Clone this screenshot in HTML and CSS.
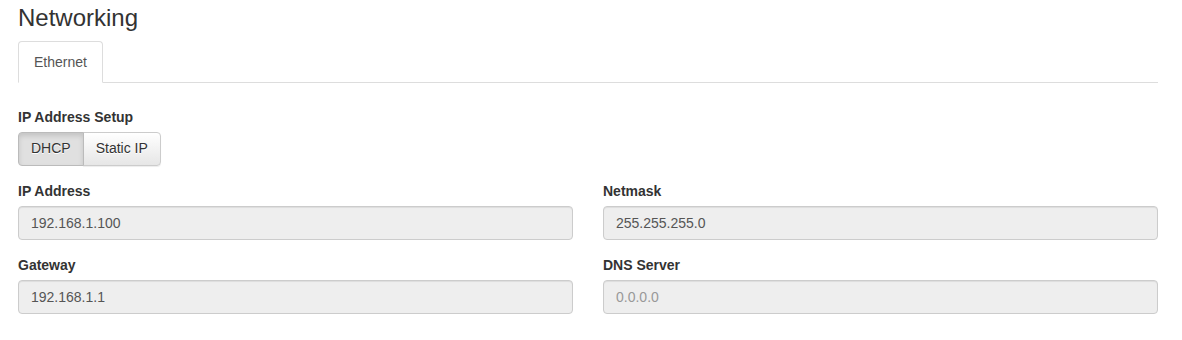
FILE: index.html
```html
<!DOCTYPE html>
<html lang="en">
<head>
    <meta charset="UTF-8">
    <meta name="viewport" content="width=device-width, initial-scale=1.0">
    <title>Networking</title>
    <link rel="stylesheet" href="styles.css">
</head>
<body>
    <div class="container">
        <h3 class="page-title">Networking</h3>

        <ul class="nav-tabs">
            <li class="active"><a href="#">Ethernet</a></li>
        </ul>

        <div class="tab-content">
            <div class="form-group">
                <label>IP Address Setup</label>
                <div class="btn-group">
                    <button class="btn active">DHCP</button>
                    <button class="btn">Static IP</button>
                </div>
            </div>

            <div class="row">
                <div class="form-group">
                    <label for="ip">IP Address</label>
                    <input type="text" id="ip" class="form-control" value="192.168.1.100" readonly>
                </div>
                <div class="form-group">
                    <label for="netmask">Netmask</label>
                    <input type="text" id="netmask" class="form-control" value="255.255.255.0" readonly>
                </div>
                <div class="form-group">
                    <label for="gateway">Gateway</label>
                    <input type="text" id="gateway" class="form-control" value="192.168.1.1" readonly>
                </div>
                <div class="form-group">
                    <label for="dns">DNS Server</label>
                    <input type="text" id="dns" class="form-control" placeholder="0.0.0.0" readonly>
                </div>
            </div>
        </div>
    </div>
</body>
</html>
```

FILE: styles.css
```css
body {
    margin: 0;
    font-family: "Liberation Sans", Arial, Helvetica, sans-serif;
    font-size: 14px;
    line-height: 1.42857;
    color: #333;
    background: #fff;
}
.container {
    padding: 0 24px 0 18px;
}
.page-title {
    margin: 5px 0 10px;
    font-size: 24px;
    font-weight: 500;
    line-height: 26px;
}

/* Tabs */
.nav-tabs {
    display: flex;
    margin: 0;
    padding: 0;
    list-style: none;
    border-bottom: 1px solid #ddd;
}
.nav-tabs li {
    margin-bottom: -1px;
}
.nav-tabs li a {
    display: block;
    padding: 10px 15px;
    line-height: 20px;
    color: #555;
    text-decoration: none;
    border: 1px solid transparent;
    border-radius: 4px 4px 0 0;
}
.nav-tabs li.active a {
    background: #fff;
    border-color: #ddd #ddd transparent;
}
.tab-content {
    padding-top: 24px;
}

/* Form */
.row {
    display: grid;
    grid-template-columns: 1fr 1fr;
    column-gap: 30px;
}
.form-group {
    margin-bottom: 15px;
}
.form-group label {
    display: block;
    margin-bottom: 5px;
    font-weight: bold;
    line-height: 20px;
}
.form-control {
    display: block;
    box-sizing: border-box;
    width: 100%;
    height: 34px;
    padding: 6px 12px;
    font-family: inherit;
    font-size: 14px;
    line-height: 1.42857;
    color: #555;
    background: #eee;
    border: 1px solid #ccc;
    border-radius: 4px;
    box-shadow: inset 0 1px 1px rgba(0, 0, 0, 0.075);
    outline: none;
}
.form-control::placeholder {
    color: #999;
}

/* Button group */
.btn-group {
    display: inline-flex;
}
.btn {
    padding: 6px 12px;
    font-family: inherit;
    font-size: 14px;
    line-height: 1.42857;
    color: #333;
    text-shadow: 0 1px 0 #fff;
    background: linear-gradient(to bottom, #fff 0%, #e6e6e6 100%);
    border: 1px solid #ccc;
    box-shadow: inset 0 1px 0 rgba(255, 255, 255, 0.15), 0 1px 1px rgba(0, 0, 0, 0.075);
    cursor: pointer;
}
.btn:first-child {
    border-radius: 4px 0 0 4px;
}
.btn:last-child {
    margin-left: -1px;
    border-radius: 0 4px 4px 0;
}
.btn.active {
    background: #e0e0e0;
    border-color: #bbb;
    box-shadow: inset 0 3px 5px rgba(0, 0, 0, 0.125);
    position: relative;
    z-index: 1;
}
```
